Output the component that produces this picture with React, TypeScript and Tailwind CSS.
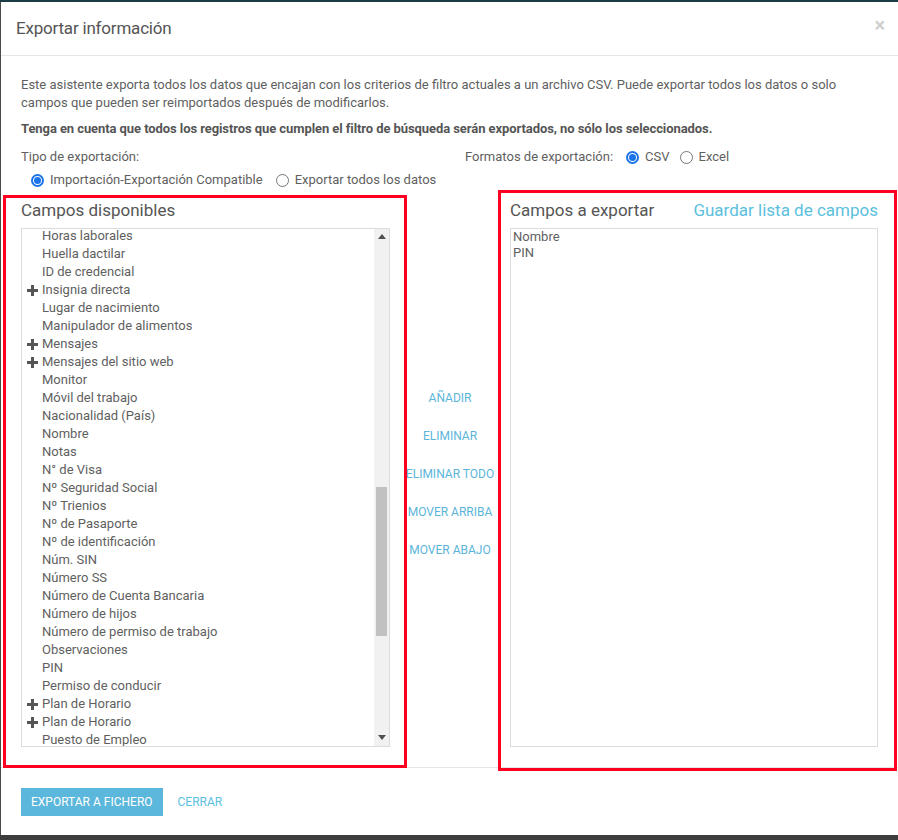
import React from "react";

type Field = { label: string; group?: boolean };

const fields: Field[] = [
  { label: "Horas laborales" },
  { label: "Huella dactilar" },
  { label: "ID de credencial" },
  { label: "Insignia directa", group: true },
  { label: "Lugar de nacimiento" },
  { label: "Manipulador de alimentos" },
  { label: "Mensajes", group: true },
  { label: "Mensajes del sitio web", group: true },
  { label: "Monitor" },
  { label: "Móvil del trabajo" },
  { label: "Nacionalidad (País)" },
  { label: "Nombre" },
  { label: "Notas" },
  { label: "N° de Visa" },
  { label: "Nº Seguridad Social" },
  { label: "Nº Trienios" },
  { label: "Nº de Pasaporte" },
  { label: "Nº de identificación" },
  { label: "Núm. SIN" },
  { label: "Número SS" },
  { label: "Número de Cuenta Bancaria" },
  { label: "Número de hijos" },
  { label: "Número de permiso de trabajo" },
  { label: "Observaciones" },
  { label: "PIN" },
  { label: "Permiso de conducir" },
  { label: "Plan de Horario", group: true },
  { label: "Plan de Horario", group: true },
  { label: "Puesto de Empleo" },
];

const actions = ["Añadir", "Eliminar", "Eliminar todo", "Mover arriba", "Mover abajo"];

function Radio({ checked, label }: { checked?: boolean; label: string }) {
  return (
    <label className="flex items-center gap-[6px]">
      {checked ? (
        <span className="w-[13px] h-[13px] rounded-full border-2 border-[#1a73e8] flex items-center justify-center">
          <span className="w-[7px] h-[7px] rounded-full bg-[#1a73e8]" />
        </span>
      ) : (
        <span className="w-[13px] h-[13px] rounded-full border border-[#767676]" />
      )}
      <span>{label}</span>
    </label>
  );
}

function Plus() {
  return (
    <svg width="11" height="11" viewBox="0 0 11 11" className="shrink-0">
      <path d="M4 0h3v4h4v3H7v4H4V7H0V4h4z" fill="#555" />
    </svg>
  );
}

export default function App() {
  return (
    <div
      className="w-[898px] h-[840px] bg-[#3d3d3d] flex flex-col overflow-hidden"
      style={{ fontFamily: "Roboto, 'Liberation Sans', sans-serif" }}
    >
      <div className="h-[2px] bg-[#1d3c47]" />
      <div className="flex h-[833px]">
        <div className="w-[1px] bg-[#4a4a4a]" />
        <div className="flex-1 bg-white relative flex flex-col text-[#5f5f5f]">
          {/* header */}
          <header className="h-[54px] border-b border-[#e5e5e5] pl-[15px] pr-[13px] flex items-center justify-between">
            <h1 className="text-[17px] tracking-[-0.2px] text-[#555] font-normal">Exportar información</h1>
            <span className="text-[20px] font-bold text-[#cfcfcf] leading-none -mt-[8px]">×</span>
          </header>

          {/* body */}
          <section className="flex-1 pl-[20px] pr-[20px] pt-[20px] text-[13px] leading-[18px]">
            <p>
              Este asistente exporta todos los datos que encajan con los criterios de filtro actuales a un archivo
              CSV. Puede exportar todos los datos o solo campos que pueden ser reimportados después de
              modificarlos.
            </p>
            <p className="mt-[8px] font-bold text-[#555] tracking-[-0.08px]">
              Tenga en cuenta que todos los registros que cumplen el filtro de búsqueda serán exportados, no sólo
              los seleccionados.
            </p>

            <div className="flex mt-[10px]">
              <div className="w-[444px]">
                <div>Tipo de exportación:</div>
                <div className="flex gap-[13px] mt-[5px] pl-[10px]">
                  <Radio checked label="Importación-Exportación Compatible" />
                  <Radio label="Exportar todos los datos" />
                </div>
              </div>
              <div className="flex items-start gap-[13px]">
                <span>Formatos de exportación:</span>
                <div className="flex gap-[10px]">
                  <Radio checked label="CSV" />
                  <Radio label="Excel" />
                </div>
              </div>
            </div>

            <div className="flex mt-[11px]">
              {/* available */}
              <div className="w-[369px]">
                <h2 className="text-[17px] leading-[20px] text-[#555]">Campos disponibles</h2>
                <div className="mt-[8px] h-[519px] border border-[#dcdcdc] flex overflow-hidden">
                  <div className="flex-1 overflow-hidden">
                    <ul className="-mt-[2px]">
                      {fields.map((f, i) => (
                        <li key={i} className="h-[18px] flex items-center pl-[5px]">
                          <span className="w-[15px] flex">{f.group && <Plus />}</span>
                          <span>{f.label}</span>
                        </li>
                      ))}
                    </ul>
                  </div>
                  <div className="w-[15px] bg-[#f1f1f1] flex flex-col items-center">
                    <svg width="8" height="5" viewBox="0 0 8 5" className="mt-[5px]">
                      <path d="M0 5L4 0L8 5z" fill="#505050" />
                    </svg>
                    <div className="flex-1 w-full px-[2px] flex flex-col">
                      <div className="h-[248px]" />
                      <div className="h-[149px] bg-[#c1c1c1]" />
                    </div>
                    <svg width="8" height="5" viewBox="0 0 8 5" className="mb-[6px]">
                      <path d="M0 0L8 0L4 5z" fill="#505050" />
                    </svg>
                  </div>
                </div>
              </div>

              {/* actions */}
              <div className="w-[120px] flex flex-col items-center pt-[189px] gap-[20px]">
                {actions.map((a) => (
                  <span key={a} className="text-[12px] leading-[18px] uppercase text-[#5bb5d9] whitespace-nowrap">
                    {a}
                  </span>
                ))}
              </div>

              {/* selected */}
              <div className="w-[368px]">
                <div className="flex items-center justify-between">
                  <h2 className="text-[17px] leading-[20px] text-[#555]">Campos a exportar</h2>
                  <span className="text-[17px] leading-[20px] text-[#5bc0de]">Guardar lista de campos</span>
                </div>
                <div className="mt-[8px] h-[519px] border border-[#dcdcdc] px-[2px] leading-[16px]">
                  <div>Nombre</div>
                  <div>PIN</div>
                </div>
              </div>
            </div>
          </section>

          {/* footer */}
          <footer className="h-[68px] border-t border-[#e5e5e5] pl-[20px] pt-[20px] flex items-start gap-[15px]">
            <button className="h-[28px] px-[10px] bg-[#5bb7db] text-white text-[12px] uppercase">
              Exportar a fichero
            </button>
            <button className="h-[28px] text-[12px] uppercase text-[#5bc0de]">Cerrar</button>
          </footer>

          {/* annotation frames */}
          <div className="absolute left-[2px] top-[193px] w-[404px] h-[573px] border-[3px] border-[#ff0022] pointer-events-none" />
          <div className="absolute left-[497px] top-[188px] w-[399px] h-[581px] border-[3px] border-[#ff0022] pointer-events-none" />
        </div>
      </div>
    </div>
  );
}
